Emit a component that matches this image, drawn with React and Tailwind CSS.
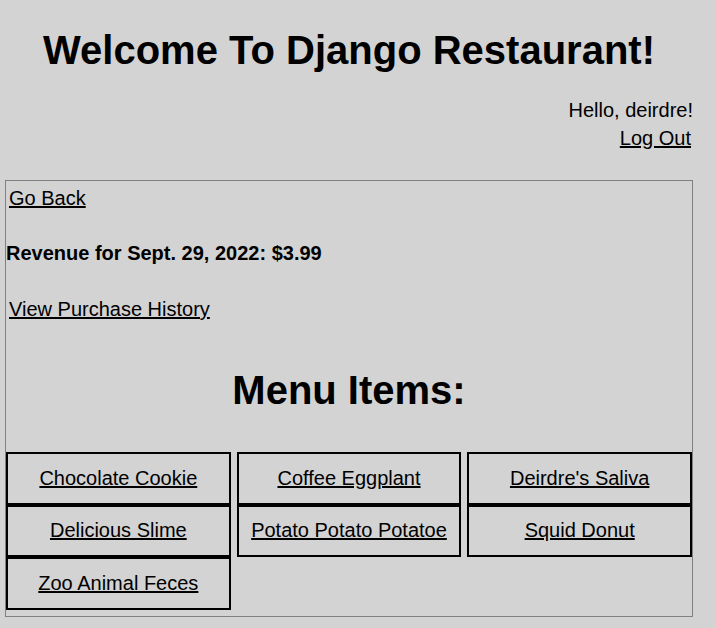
export default function App() {
  const items = [
    'Chocolate Cookie',
    'Coffee Eggplant',
    "Deirdre's Saliva",
    'Delicious Slime',
    'Potato Potato Potatoe',
    'Squid Donut',
    'Zoo Animal Feces',
  ];

  return (
    <div className="min-h-screen bg-[#d3d3d3] font-['Liberation_Sans',Arial,sans-serif] text-black">
      <div className="ml-[5px] w-[688px]">
        <h1 className="pt-[27px] text-center text-[40px] font-bold leading-[46px]">
          Welcome To Django Restaurant!
        </h1>

        {/* user info */}
        <div className="mt-[26px] text-right text-[20px] leading-[23px]">
          <p>Hello, deirdre!</p>
          <div className="pt-[5px] pr-[2px]">
            <a href="#" className="underline">Log Out</a>
          </div>
        </div>

        {/* main panel */}
        <div className="mt-[30px] border border-[#808080] pt-[6px] pb-[6px]">
          <div className="pl-[3px] text-[20px] leading-[23px]">
            <a href="#" className="underline">Go Back</a>
          </div>
          <h3 className="mt-[32px] text-[20px] font-bold leading-[23px]">
            Revenue for Sept. 29, 2022: $3.99
          </h3>
          <div className="mt-[33px] pl-[3px] text-[20px] leading-[23px]">
            <a href="#" className="underline">View Purchase History</a>
          </div>
          <h1 className="mt-[46px] text-center text-[40px] font-bold leading-[46px]">
            Menu Items:
          </h1>

          <div className="mt-[39px] grid grid-cols-3 gap-x-[6px]">
            {items.map((name) => (
              <div
                key={name}
                className="flex h-[52.5px] items-center justify-center border-2 border-black text-[20px] leading-[23px]"
              >
                <a href="#" className="underline">{name}</a>
              </div>
            ))}
          </div>
        </div>
      </div>
    </div>
  );
}
